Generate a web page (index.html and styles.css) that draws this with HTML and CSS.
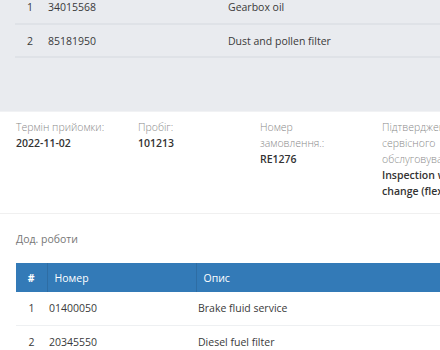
FILE: index.html
```html
<!DOCTYPE html>
<html lang="uk">
<head>
<meta charset="utf-8">
<link rel="stylesheet" href="styles.css">
</head>
<body>
<section class="parts">
  <table class="list">
    <colgroup><col class="c-n"><col class="c-num"><col></colgroup>
    <tr><td class="n">1</td><td>34015568</td><td>Gearbox oil</td></tr>
    <tr><td class="n">2</td><td>85181950</td><td>Dust and pollen filter</td></tr>
  </table>
</section>
<section class="info">
  <div class="field">
    <div class="label">Термін прийомки:</div>
    <div class="value">2022-11-02</div>
  </div>
  <div class="field">
    <div class="label">Пробіг:</div>
    <div class="value">101213</div>
  </div>
  <div class="field">
    <div class="label">Номер замовлення.:</div>
    <div class="value">RE1276</div>
  </div>
  <div class="field field-wide">
    <div class="label">Підтвердження сервісного обслуговування:</div>
    <div class="value">Inspection with oil change (flexible)</div>
  </div>
</section>
<section class="extra">
  <h3 class="title">Дод. роботи</h3>
  <table class="works">
    <colgroup><col class="w-n"><col class="w-num"><col></colgroup>
    <thead>
      <tr><th class="hn">#</th><th>Номер</th><th>Опис</th></tr>
    </thead>
    <tbody>
      <tr><td class="n">1</td><td>01400050</td><td>Brake fluid service</td></tr>
      <tr><td class="n">2</td><td>20345550</td><td>Diesel fuel filter</td></tr>
    </tbody>
  </table>
</section>
</body>
</html>
```
FILE: styles.css
```css
* { box-sizing: border-box; }
html, body { margin: 0; padding: 0; }
body {
  width: 440px;
  height: 350px;
  overflow: hidden;
  background: #fff;
  font-family: "Open Sans", "Liberation Sans", sans-serif;
  font-size: 10.5px;
  color: #333;
}
table { border-collapse: collapse; table-layout: fixed; }

.parts {
  background: #e9ebef;
  padding: 0 0 53px 15px;
  border-bottom: 1px solid #f1f2f4;
}
.list {
  width: 560px;
  margin-top: -9px;
}
.list .c-n { width: 27px; }
.list .c-num { width: 180px; }
.list td {
  height: 33px;
  padding: 0 0 0 6px;
  border-bottom: 2px solid #dfe2e7;
  vertical-align: middle;
  white-space: nowrap;
  color: #3a3a3a;
}
.list td.n { text-align: center; padding-left: 3px; }

.info {
  display: grid;
  grid-template-columns: repeat(4, 122px);
  padding: 7px 0 14px 16px;
  border-bottom: 1px solid #f0f0f0;
  line-height: 16px;
  width: 600px;
}
.field { padding-right: 30px; }
.field-wide { padding-right: 4px; }
.label { color: #8a8a8a; font-weight: 300; }
.value { font-weight: 600; color: #333; }

.extra { padding: 16px 0 0 16px; }
.title {
  margin: 0 0 15px;
  font-size: 10.5px;
  font-weight: 400;
  color: #777;
  line-height: 18px;
}
.works { width: 560px; }
.works .w-n { width: 31px; }
.works .w-num { width: 149px; }
.works th {
  background: #337ab7;
  color: #fff;
  font-weight: 400;
  text-align: left;
  height: 29px;
  padding: 0 0 0 7px;
  border-left: 1px solid #2e6da4;
  vertical-align: middle;
}
.works th.hn { border-left: 0; text-align: center; padding: 0; font-weight: 700; }
.works td {
  height: 33px;
  padding: 0 0 0 2px;
  border-bottom: 1px solid #eef0f2;
  vertical-align: middle;
  white-space: nowrap;
  color: #3a3a3a;
}
.works td.n { text-align: center; padding: 0; }
```
